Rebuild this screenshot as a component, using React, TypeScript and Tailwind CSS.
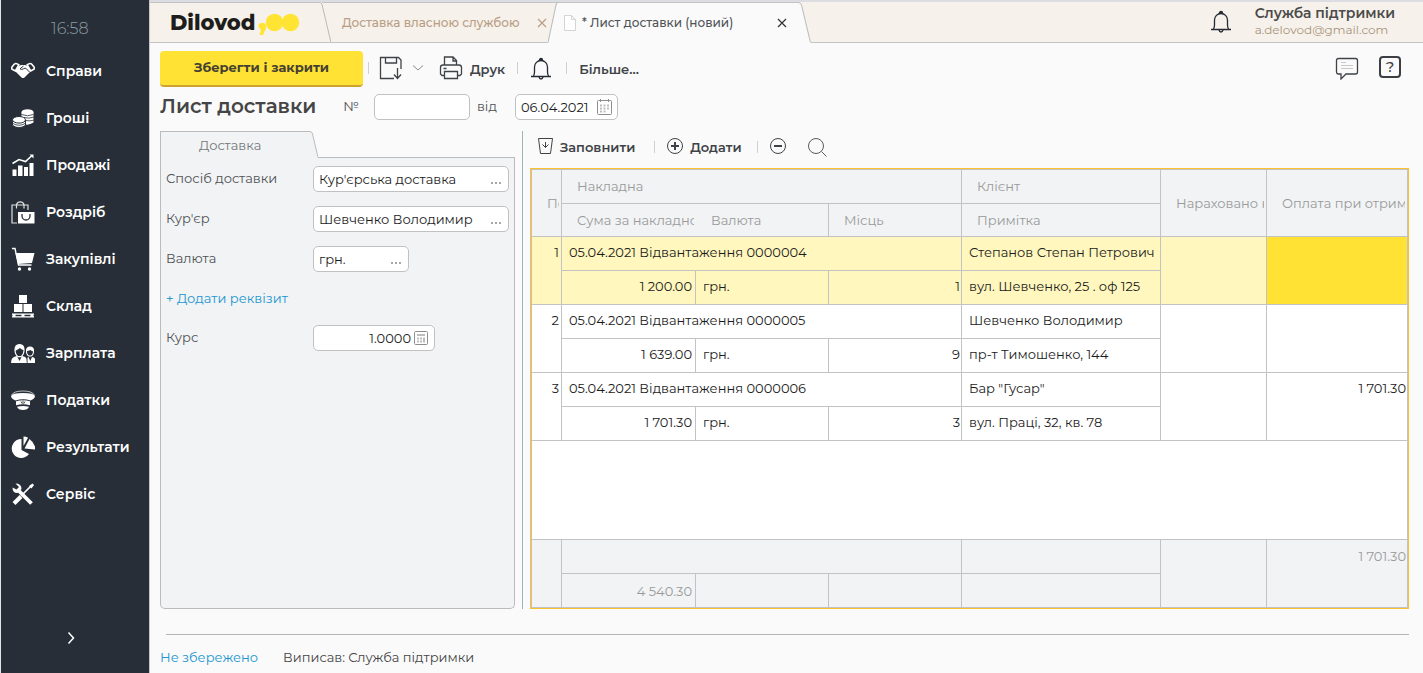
import type { ReactNode } from 'react';

const menu = [
  {
    title: 'Справи',
    icon: (
      <>
        <path d="M7 7.500 10 6h4l3 1 3 5-6.500 6.500q-1.500 1-3 0L4 12z" fill="currentColor" stroke="none" />
        <path d="M7.800 5.800 4.300 12 1.200 10.300Q0 9.500.8 8.200L3.200 5.300Q4.500 4 6.200 4.900z" strokeWidth="1.600" />
        <path d="M16.200 5.800 19.700 12l3.100-1.700q1.200-.8.4-2.100l-2.400-2.900Q19.500 4 17.800 4.900z" strokeWidth="1.600" />
        <path d="M12.500 7 9 9.800q1.500 1.400 3.500 0l2-.8 4 4" stroke="#272e37" strokeWidth="1" />
      </>
    ),
  },
  {
    title: 'Гроші',
    icon: (
      <>
        <g fill="currentColor" stroke="none">
          <ellipse cx="16.500" cy="6" rx="6" ry="2.800" />
          <path d="M10.500 6v11q6 3.500 12-.5V6q-6 4-12 0z" />
          <path d="M1.500 14v5.500q6.500 5 13 0V14z" stroke="#272e37" strokeWidth="1" />
          <ellipse cx="8" cy="13.800" rx="6.500" ry="3.300" stroke="#272e37" strokeWidth="1" />
        </g>
        <path d="M10.500 8.500q6 2.500 12 0M13 11.500q5 1.500 10-.5M15 14.500q4 1 8-.5M2 17.500q6 3.500 12 0M2 19.800q6 3.500 12 0" stroke="#272e37" strokeWidth=".8" />
      </>
    ),
  },
  {
    title: 'Продажі',
    icon: (
      <>
        <path d="M1.500 16.500h4V23h-4zM7 12.500h4.500V23H7zM13 14h4v9h-4zM18.500 10h4v13h-4z" fill="currentColor" stroke="none" />
        <path d="M1.500 10.500 8 6.500l6.500 2L21 2.500" strokeWidth="1.600" />
        <path d="M18.500 1.500h4v4z" fill="currentColor" stroke="none" />
      </>
    ),
  },
  {
    title: 'Роздріб',
    icon: (
      <>
        <path d="M6 23H1V5h16v5M5.500 8.500V4.500a4 4 0 0 1 7.500 0v4" strokeWidth="1.200" opacity=".85" />
        <path d="M7 12h16.500v11.500H7z" fill="currentColor" stroke="none" />
        <path d="M11 14v2a4 4 0 0 0 8 0v-2" stroke="#272e37" strokeWidth="1.300" />
      </>
    ),
  },
  {
    title: 'Закупівлі',
    icon: (
      <>
        <path d="M1 1.500h3l3.500 16.500h13" strokeWidth="1.400" />
        <path d="M4.500 6H23.500l-2.500 10-14 1z" fill="currentColor" stroke="none" />
        <circle cx="8.500" cy="22" r="1.700" fill="currentColor" stroke="none" />
        <circle cx="18.500" cy="22" r="1.700" fill="currentColor" stroke="none" />
      </>
    ),
  },
  {
    title: 'Склад',
    icon: (
      <path
        d="M8 1h8v8H8zM3 10h8.500v8H3zM12.500 10H21v8h-8.500zM1 19.500h22v1.300H1zM1 22.300h22v1.200H1zM1.500 20h3v3h-3zM10.500 20h3v3h-3zM19.500 20h3v3h-3z"
        fill="currentColor"
        stroke="none"
      />
    ),
  },
  {
    title: 'Зарплата',
    icon: (
      <>
        <path d="M4 9q0-5.500 4.500-5.500T13 9q0 5-3.300 6.700h-2.400Q4 14 4 9z" strokeWidth="1.200" />
        <path d="M4 10q0-7 5-6.500Q13.500 4 13 9q-2.500 0-4-2-2 1.500-5 3z" fill="currentColor" stroke="none" />
        <path d="M0 22q0-6.500 6-7l2.500 5 2.500-5q4 .5 4.500 3l.3 4z" fill="currentColor" stroke="none" />
        <path d="M15.500 10q0-4 3.500-4t3.500 4q0 4-2.500 5h-2q-2.500-1-2.500-5z" strokeWidth="1.100" />
        <path d="M15.500 10q0-4.500 4-4t3 4.500q-2-.2-3-1.500-2 .8-4 1z" fill="currentColor" stroke="none" />
        <path d="M16.500 22v-5.500l1-.5 1.800 4 1.700-4q3.500.5 3.500 4v2z" fill="currentColor" stroke="none" />
      </>
    ),
  },
  {
    title: 'Податки',
    icon: (
      <>
        <path d="M0 8Q1 5 12 5t12 3q0 2.500-4.500 4.500Q12 10 4.500 12.500 0 10.500 0 8z" fill="currentColor" stroke="none" />
        <path d="M.5 7Q3 3 12 3t11.500 4" strokeWidth=".7" />
        <path d="M5 13.300q7-2 14 0v4q-7-2-14 0zM6 18.800q6-1.500 12 0-1.500 3.200-6 3.200t-6-3.200z" fill="currentColor" stroke="none" />
        <path d="M12 12.500V16M10 13.500l1 2M14 13.500l-1 2" stroke="#272e37" strokeWidth=".8" />
      </>
    ),
  },
  {
    title: 'Результати',
    icon: (
      <g fill="currentColor" stroke="none">
        <path d="M10.500 4v11l7.500 4A9.500 9.500 0 1 1 10.500 4z" />
        <path d="M12.500 1.500q2.500 0 4.500 1.200L12.500 11z" />
        <path d="m18.500 4-5 9.500 11 1Q24 8 18.500 4z" />
      </g>
    ),
  },
  {
    title: 'Сервіс',
    icon: (
      <>
        <path d="m7.500 8.500 13 13" strokeWidth="3.800" />
        <path d="M1.500 5.500Q1.500 11 6.500 11l4-4q0-5.500-6-5.500L8 5 5.500 7.500z" fill="currentColor" stroke="none" />
        <path d="m3 21.500 7-7" strokeWidth="4" />
        <path d="M10 14 20 4" strokeWidth="1.700" />
        <path d="m18 4 3.500-2.500L23 3l-2.500 3.500z" fill="currentColor" stroke="none" />
      </>
    ),
  },
];

const rows = [
  { id: 1, doc: '05.04.2021 Відвантаження 0000004', sum: '1 200.00', places: 1, client: 'Степанов Степан Петрович', note: 'вул. Шевченко, 25 . оф 125', paid: '' },
  { id: 2, doc: '05.04.2021 Відвантаження 0000005', sum: '1 639.00', places: 9, client: 'Шевченко Володимир', note: 'пр-т Тимошенко, 144', paid: '' },
  { id: 3, doc: '05.04.2021 Відвантаження 0000006', sum: '1 701.30', places: 3, client: 'Бар "Гусар"', note: 'вул. Праці, 32, кв. 78', paid: '1 701.30' },
];

function Icon({ children, className = '' }: { children: ReactNode; className?: string }) {
  return (
    <svg width="24" height="24" viewBox="0 0 24 24" fill="none" stroke="currentColor" strokeWidth="1.3" className={`shrink-0 ${className}`} aria-hidden="true">
      {children}
    </svg>
  );
}

function Bell() {
  return (
    <Icon className="text-[#252b33]">
      <path d="M2 20.500h20M4.500 20q1-1.500 1-4v-5a6.500 6.500 0 0 1 13 0v5q0 2.500 1 4M10 21q.5 2 2 2t2-2" />
      <path d="M10.500 4a1.500 1.500 0 1 1 3 0z" fill="currentColor" />
    </Icon>
  );
}

function Cross() {
  return (
    <svg width="10" height="10" viewBox="0 0 10 10" fill="none" stroke="currentColor" strokeWidth="1.200" aria-hidden="true">
      <path d="m1 1 8 8M9 1 1 9" />
    </svg>
  );
}

function Separator({ className = '' }: { className?: string }) {
  return <span className={`h-3 w-px shrink-0 bg-[#d0d0d0] ${className}`} />;
}

function Sidebar() {
  return (
    <aside className="flex w-[150px] shrink-0 flex-col border-x border-l-[#dfe8e6] border-r-[#c4c6c8] bg-[#272e37] text-white">
      <time className="mt-[19px] pl-[50px] text-base leading-5 font-light text-[#8b9ba5]">16:58</time>
      <nav className="mt-2 flex flex-col">
        {menu.map((item) => (
          <a key={item.title} href="#" className="flex h-[47px] items-center gap-[11px] pl-[10px] text-sm font-semibold">
            <Icon>{item.icon}</Icon>
            {item.title}
          </a>
        ))}
      </nav>
      <button type="button" aria-label="Розгорнути меню" className="mt-auto mb-[28px] ml-16 flex w-3 justify-center">
        <svg width="8" height="14" viewBox="0 0 8 14" fill="none" stroke="currentColor" strokeWidth="1.500" aria-hidden="true">
          <path d="m1.500 1.500 5 5.500-5 5.500" />
        </svg>
      </button>
    </aside>
  );
}

function TopBar() {
  return (
    <header className="flex h-[43px] border-t-2 border-[#dcdde3] bg-[#f6f1ea]">
      <div className="flex w-[170px] items-center border-t border-b border-[#c3c3c3] pl-[20px]">
        <a href="#" className="flex items-center">
          <span className="text-[21px] leading-6 font-extrabold text-[#1d1d1b]">Dilovod</span>
          <svg width="44" height="26" viewBox="0 0 44 26" fill="#ffe434" className="ml-px" aria-hidden="true">
            <path d="M3 13.500q3-1.500 5.500.5 1.500 2.500 0 5.500L6 25H2.500l1.500-5.500Q1.500 18.500 1.500 16T3 13.500z" />
            <circle cx="17.500" cy="12.500" r="8.700" />
            <circle cx="33.500" cy="12.500" r="8.700" />
          </svg>
        </a>
      </div>
      <svg width="11" height="41" viewBox="0 0 11 41" fill="none" stroke="#b9b9b9" aria-hidden="true">
        <path d="M0 .5q1.500 0 2 2L11 40.500" />
        <path d="M2 .5h9M0 40.500h11" stroke="#c3c3c3" />
      </svg>
      <div className="flex w-[217px] items-center justify-between border-t border-b border-[#c3c3c3] pr-px pl-[11px] text-[#b99d85]">
        <a href="#" className="text-xs font-medium whitespace-nowrap">Доставка власною службою</a>
        <button type="button" aria-label="Закрити вкладку"><Cross /></button>
      </div>
      <svg width="10" height="41" viewBox="0 0 10 41" fill="none" stroke="#b9b9b9" aria-hidden="true">
        <path d="M0 41 8 3q.5-2.500 2-2.500V41z" fill="#fafafa" stroke="none" />
        <path d="M0 .5h10" stroke="#c3c3c3" />
        <path d="M0 40.500 8 3q.5-2.500 2-2.500" />
      </svg>
      <div className="flex w-[240px] items-center border-t border-[#c3c3c3] bg-[#fafafa] pr-[11px] pl-[6px] text-[#4f5358]">
        <svg width="12" height="16" viewBox="0 0 12 16" fill="#fff" stroke="#d4d4d4" aria-hidden="true">
          <path d="M.5.5h7l4 4v11H.5zM7.500.5v4h4" />
        </svg>
        <a href="#" className="ml-[6px] text-xs font-medium whitespace-nowrap">* Лист доставки (новий)</a>
        <button type="button" aria-label="Закрити" className="ml-auto text-[#333]"><Cross /></button>
      </div>
      <svg width="13" height="41" viewBox="0 0 13 41" fill="none" stroke="#b9b9b9" aria-hidden="true">
        <path d="M0 0q3 0 3.500 3L13 41H0z" fill="#fafafa" stroke="none" />
        <path d="M0 .5q3 0 3.500 2.500L12.500 40.500" />
      </svg>
      <div className="flex flex-1 items-start justify-end border-b border-[#c3c3c3] pr-7">
        <button type="button" aria-label="Сповіщення" className="mt-[7px]"><Bell /></button>
        <div className="ml-[22px] flex flex-col pt-[2px]">
          <span className="text-sm leading-[18px] font-semibold text-[#4b4b4b]">Служба підтримки</span>
          <a href="#" className="text-xs leading-4 text-[#a9947c]">a.delovod@gmail.com</a>
        </div>
      </div>
    </header>
  );
}

function Toolbar() {
  return (
    <div className="flex h-9 text-[13px] font-semibold text-[#3f4347]">
      <button type="button" className="h-9 w-[203px] rounded border-b-2 border-[#cda22f] bg-[#ffe234] pb-[2px] font-bold text-[#454132]">Зберегти і закрити</button>
      <div className="flex flex-1 items-center pb-[3px] pl-[5px]">
        <Separator />
        <button type="button" aria-label="Зберегти" className="ml-[10px]">
          <Icon>
            <path d="M15 22.500H1.500v-21h18L22 4v9M6.500 1.500V7h11V1.500M18.500 12v10M15 18.500l3.500 4 3.500-4" />
          </Icon>
        </button>
        <button type="button" aria-label="Інші варіанти збереження" className="mx-[10px] text-[#8b8b8b]">
          <svg width="10" height="6" viewBox="0 0 10 6" fill="none" stroke="currentColor" aria-hidden="true"><path d="m0 .5 5 4.500 5-4.500" /></svg>
        </button>
        <button type="button" className="ml-[6px] flex items-center gap-[7px]">
          <Icon>
            <path d="M5.500 9V1h8.500l3.500 3.500V9M14 1v4h3.500M5.500 19.500H3L1.500 18v-6.500Q1.500 9 4 9h16q2.500 0 2.500 2.500V18L21 19.500h-2.500M5.500 15.500h13v7h-13zM4.500 12.500h3" />
          </Icon>
          <span className="pt-[2px]">Друк</span>
        </button>
        <Separator className="ml-3" />
        <button type="button" aria-label="Нагадування" className="mr-[13px] ml-[11px]"><Bell /></button>
        <Separator />
        <button type="button" className="ml-3 pt-[2px]">Більше...</button>
        <div className="ml-auto flex items-center gap-5 pr-2">
          <button type="button" aria-label="Коментарі">
            <Icon>
              <path d="M3.500 2.500h17q2 0 2 2V16q0 2-2 2H11l-5 5v-5H3.500q-2 0-2-2V4.500q0-2 2-2z" />
              <path d="M6 6.500h5M6 9.500h12M6 12.500h12" stroke="#c9c9c9" strokeWidth="1" />
            </Icon>
          </button>
          <button type="button" aria-label="Довідка" className="mb-px flex h-[22px] w-[22px] items-center justify-center rounded border-2 border-[#3b3f44] text-[15px] font-medium">?</button>
        </div>
      </div>
    </div>
  );
}

function Field({ id, label, value, className = 'flex-1' }: { id: string; label: string; value: string; className?: string }) {
  return (
    <div className="flex h-[26px] items-center">
      <label htmlFor={id} className="w-[147px] shrink-0 pb-[3px] text-[#4f5254]">{label}</label>
      <div className={`flex h-[26px] min-w-0 items-center rounded-[5px] border border-[#bfc1c3] bg-white pr-[7px] pl-[5px] ${className}`}>
        <input id={id} defaultValue={value} className="w-0 min-w-0 flex-1 pb-px text-[#1b1b1b] outline-none" />
        <button type="button" aria-label={`Вибрати: ${label}`} className="flex gap-[2px] pt-2">
          <i className="h-[2px] w-[2px] bg-[#a6a6a6]" />
          <i className="h-[2px] w-[2px] bg-[#a6a6a6]" />
          <i className="h-[2px] w-[2px] bg-[#a6a6a6]" />
        </button>
      </div>
    </div>
  );
}

function DeliveryPanel() {
  return (
    <section className="flex w-[355px] shrink-0 flex-col">
      <div className="flex h-[27px]">
        <h2 className="flex w-[150px] items-center border-t border-l border-[#b9bbbc] bg-[#f1f3f5] pl-[38px] text-[#75787b]">Доставка</h2>
        <svg width="8" height="27" viewBox="0 0 8 27" fill="none" aria-hidden="true">
          <path d="M0 .5q2 0 2.500 2.500L8 27H0z" fill="#f1f3f5" />
          <path d="M0 .5q2 0 2.500 2.500L8 26.500" stroke="#b9bbbc" />
        </svg>
        <div className="flex-1 border-b border-[#b9bbbc]" />
      </div>
      <div className="flex flex-1 flex-col gap-[14px] rounded-b-[5px] border-x border-b border-[#b9bbbc] bg-[#f1f3f5] pt-2 pr-[5px] pl-[5px]">
        <Field id="method" label="Спосіб доставки" value="Кур'єрська доставка" />
        <Field id="courier" label="Кур'єр" value="Шевченко Володимир" />
        <Field id="currency" label="Валюта" value="грн." className="w-24" />
        <a href="#" className="flex h-[26px] items-center pb-[3px] text-[#2196d0]">+ Додати реквізит</a>
        <div className="-mt-px flex h-[26px] items-center">
          <label htmlFor="rate" className="w-[147px] shrink-0 pb-[3px] text-[#4f5254]">Курс</label>
          <div className="flex h-[26px] w-[122px] items-center gap-[3px] rounded-[5px] border border-[#bfc1c3] bg-white pr-[6px]">
            <input id="rate" defaultValue="1.0000" className="w-0 min-w-0 flex-1 pb-px text-right text-[#1b1b1b] outline-none" />
            <button type="button" aria-label="Калькулятор">
              <svg width="14" height="14" viewBox="0 0 14 14" fill="none" stroke="#8e8e8e" aria-hidden="true">
                <rect x=".5" y=".5" width="13" height="13" rx="1" />
                <path d="M3 4h8" stroke="#bdbdbd" strokeWidth="2" />
                <path d="M3 7.500h5M3 10.500h5" stroke="#bdbdbd" strokeWidth="2" strokeDasharray="2 1" />
                <path d="M10 6.500v5" stroke="#bdbdbd" strokeWidth="2" />
              </svg>
            </button>
          </div>
        </div>
      </div>
    </section>
  );
}

function TableToolbar() {
  return (
    <div className="flex h-[37px] items-center pb-[5px] pl-2 text-[13px] font-semibold text-[#3f4347]">
      <button type="button" className="flex items-center gap-[7px]">
        <svg width="15" height="16" viewBox="0 0 15 16" fill="none" stroke="currentColor" className="mb-[2px]" aria-hidden="true">
          <path d="M.5.5h14l-2 15h-10zM7.500 4v5.500M4.500 6.500l3 3 3-3" />
        </svg>
        Заповнити
      </button>
      <Separator className="ml-[19px]" />
      <button type="button" className="ml-3 flex items-center gap-[7px]">
        <svg width="16" height="16" viewBox="0 0 16 16" fill="none" stroke="currentColor" className="mb-[2px]" aria-hidden="true">
          <circle cx="8" cy="8" r="7.500" /><path d="M4 8h8M8 4v8" strokeWidth="2" />
        </svg>
        Додати
      </button>
      <Separator className="ml-[15px]" />
      <button type="button" aria-label="Видалити рядок" className="ml-3 pb-[2px]">
        <svg width="16" height="16" viewBox="0 0 16 16" fill="none" stroke="currentColor" aria-hidden="true">
          <circle cx="8" cy="8" r="7.500" /><path d="M4 8h8" strokeWidth="2" />
        </svg>
      </button>
      <button type="button" aria-label="Пошук" className="ml-[21px]">
        <svg width="20" height="20" viewBox="0 0 20 20" fill="none" stroke="#5a5a5a" aria-hidden="true">
          <circle cx="9" cy="9" r="7.500" /><path d="m14.500 14.500 5 5" />
        </svg>
      </button>
    </div>
  );
}

const line = 'border-r border-b border-[#c3c3c3] p-0';
const cell = `${line} pb-[3px]`;
const head = `${line} bg-[#f1f3f5] text-left font-normal text-[#9a9a9a]`;
const foot = `${line} bg-[#f1f3f5] pr-[2px] text-right text-[#9a9a9a]`;

function Clip({ children }: { children: ReactNode }) {
  return <div className="mr-[2px] overflow-hidden pl-[15px] whitespace-nowrap">{children}</div>;
}

function InvoiceTable() {
  return (
    <div className="flex flex-1 border border-[#fbc02d]">
      <div className="flex flex-1 flex-col border border-[#c3c3c3] bg-white">
        <table className="w-full flex-1 table-fixed border-separate border-spacing-0">
          <colgroup>
            <col className="w-[30px]" />
            <col className="w-[134px]" />
            <col className="w-[133px]" />
            <col className="w-[133px]" />
            <col className="w-[199px]" />
            <col className="w-[106px]" />
            <col />
          </colgroup>
          <thead>
            <tr className="h-[34px]">
              <th rowSpan={2} className={head}><Clip>Пор.</Clip></th>
              <th colSpan={3} className={`${head} pb-px`}><Clip>Накладна</Clip></th>
              <th className={`${head} pb-px`}><Clip>Клієнт</Clip></th>
              <th rowSpan={2} className={head}><Clip>Нараховано к</Clip></th>
              <th rowSpan={2} className={`${head} border-r-0`}><Clip>Оплата при отриманні</Clip></th>
            </tr>
            <tr className="h-[33px]">
              <th className={`${head} border-r-0`}><Clip>Сума за накладною</Clip></th>
              <th className={head}><Clip>Валюта</Clip></th>
              <th className={head}><Clip>Місць</Clip></th>
              <th className={head}><Clip>Примітка</Clip></th>
            </tr>
          </thead>
          <tbody className="text-[#1b1b1b]">
            {rows.map((row) => [
              <tr key={`${row.id}-doc`} className={`h-[34px] ${row.id === 1 ? 'bg-[#fff7be]' : ''}`}>
                <td rowSpan={2} className={`${cell} pt-[5px] pr-[2px] text-right align-top`}>{row.id}</td>
                <td colSpan={3} className={`${cell} pl-[7px]`}>{row.doc}</td>
                <td className={`${cell} pl-[7px] whitespace-nowrap`}>{row.client}</td>
                <td rowSpan={2} className={cell} />
                <td rowSpan={2} className={`${cell} border-r-0 pt-[5px] pr-px text-right align-top ${row.id === 1 ? 'bg-[#ffe234]' : ''}`}>{row.paid}</td>
              </tr>,
              <tr key={`${row.id}-sum`} className={`h-[34px] ${row.id === 1 ? 'bg-[#fff7be]' : ''}`}>
                <td className={`${cell} pr-[3px] text-right`}>{row.sum}</td>
                <td className={`${cell} pl-[7px]`}>грн.</td>
                <td className={`${cell} pr-px text-right`}>{row.places}</td>
                <td className={`${cell} pl-[7px] whitespace-nowrap`}>{row.note}</td>
              </tr>,
            ])}
            <tr>
              <td colSpan={7} className="border-b border-[#c3c3c3] p-0" />
            </tr>
          </tbody>
          <tfoot>
            <tr className="h-[34px]">
              <td rowSpan={2} className={`${foot} border-b-0`} />
              <td colSpan={3} className={foot} />
              <td className={foot} />
              <td rowSpan={2} className={`${foot} border-b-0`} />
              <td rowSpan={2} className={`${foot} border-r-0 border-b-0 pt-[6px] pr-px align-top`}>1 701.30</td>
            </tr>
            <tr className="h-[33px]">
              <td className={`${foot} border-b-0 pr-[3px]`}>4 540.30</td>
              <td className={`${foot} border-b-0`} />
              <td className={`${foot} border-b-0`} />
              <td className={`${foot} border-b-0`} />
            </tr>
          </tfoot>
        </table>
      </div>
    </div>
  );
}

export default function App() {
  return (
    <div className="flex min-h-screen bg-[#fafafa] font-['Montserrat','Inter',sans-serif] text-[13px] leading-5">
      <Sidebar />
      <div className="flex min-w-0 flex-1 flex-col">
        <TopBar />
        <main className="flex flex-1 flex-col pt-2 pr-[14px] pl-[10px]">
          <Toolbar />
          <div className="mt-[7px] flex h-[26px] items-center text-[#4f5254]">
            <h1 className="pb-[2px] text-xl font-semibold text-[#454545]">Лист доставки</h1>
            <label htmlFor="number" className="ml-[27px] pb-[3px]">№</label>
            <input id="number" className="ml-[15px] h-[26px] w-24 rounded-[5px] border border-[#bfc1c3] bg-white px-[6px]" />
            <label htmlFor="date" className="ml-[7px] pb-[3px]">від</label>
            <div className="ml-[18px] flex h-[26px] w-[103px] items-center rounded-[5px] border border-[#bfc1c3] bg-white pr-[5px] pl-[5px]">
              <input id="date" defaultValue="06.04.2021" className="w-0 min-w-0 flex-1 pb-px text-[#1b1b1b] outline-none" />
              <button type="button" aria-label="Календар">
                <svg width="15" height="16" viewBox="0 0 15 16" fill="none" stroke="#8e8e8e" aria-hidden="true">
                  <rect x=".5" y="1.500" width="14" height="14" rx="1" />
                  <path d="M3.500 0v3M11.500 0v3" />
                  <path d="M3 6.500h9M3 9.500h9M3 12.500h6" stroke="#bdbdbd" strokeWidth="2" strokeDasharray="2 1.500" />
                </svg>
              </button>
            </div>
          </div>
          <div className="mt-[11px] flex flex-1">
            <DeliveryPanel />
            <div className="mx-[7px] w-px shrink-0 bg-[#9db4b5]" />
            <section className="flex min-w-0 flex-1 flex-col">
              <TableToolbar />
              <InvoiceTable />
            </section>
          </div>
          <hr className="mt-[25px] ml-[6px] border-[#b5b5b5]" />
          <footer className="flex h-[38px] items-center gap-[25px] pt-[5px] text-[#454545]">
            <a href="#" className="text-[#2196d0]">Не збережено</a>
            <span>Виписав: Служба підтримки</span>
          </footer>
        </main>
      </div>
    </div>
  );
}
